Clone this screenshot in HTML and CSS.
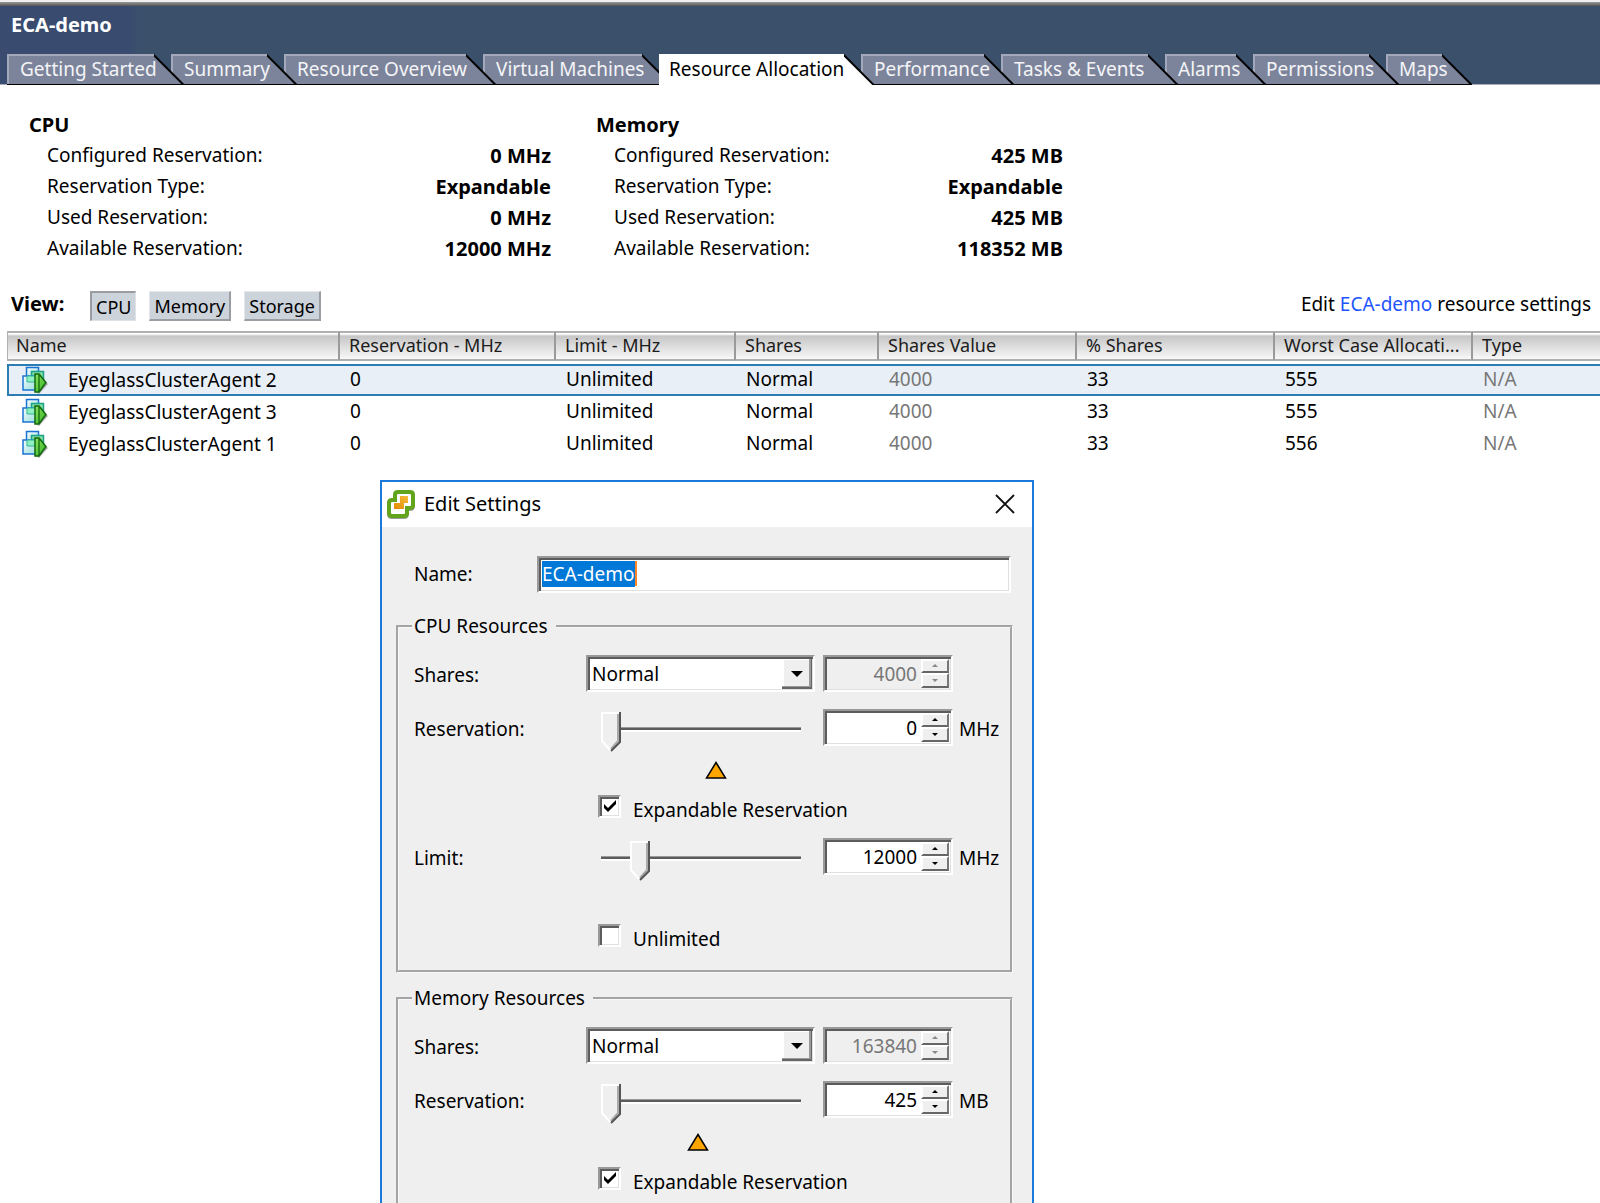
FILE: index.html
```html
<!DOCTYPE html>
<html lang="en">

<head>
    <meta charset="UTF-8">
    <meta name="viewport" content="width=device-width, initial-scale=1.0">
    <title>ECA-demo</title>
    <link rel="stylesheet" href="styles.css">
</head>

<body>
    <!-- shared icons -->
    <svg class="defs" width="0" height="0" aria-hidden="true">
        <defs>
            <linearGradient id="pane" x1="0" y1="0" x2="1" y2="1">
                <stop offset="0" stop-color="#f4fbff" />
                <stop offset="1" stop-color="#9adfd8" />
            </linearGradient>
            <linearGradient id="play" x1="0" y1="0" x2="1" y2="1">
                <stop offset="0" stop-color="#8ee860" />
                <stop offset="1" stop-color="#2fae22" />
            </linearGradient>
            <linearGradient id="gold" x1="1" y1="0" x2="0" y2="1">
                <stop offset="0" stop-color="#f7bd3a" />
                <stop offset="1" stop-color="#e08a00" />
            </linearGradient>
        </defs>
        <symbol id="vm-icon" viewBox="0 0 26 28">
            <path d="M17 9 L26 18 L17 28 L14 26 Z" fill="#8a8a8a" opacity="0.7" />
            <rect x="4.500" y="1.500" width="12" height="13" fill="url(#pane)" stroke="#1b74d4" stroke-width="1.500" />
            <rect x="9.500" y="5.500" width="12" height="13" fill="#7fe0a0" stroke="#1fa08c" stroke-width="1.500" />
            <rect x="1" y="10" width="13" height="14" fill="url(#pane)" stroke="#1b74d4" stroke-width="1.500" />
            <path d="M5 10 h10 v6 h-10 z" fill="#8ff0c0" stroke="#35b39a" stroke-width="1" />
            <path d="M13 8 h4 l7 8.500 l-7 9.500 h-4 z" fill="url(#play)" stroke="#12670f" stroke-width="1.500" />
            <path d="M17 9 V25" stroke="#12670f" stroke-width="1.300" />
        </symbol>
    </svg>

    <header class="header">
        <h1>ECA-demo</h1>
        <nav class="tabs">
            <button>Getting Started</button>
            <button>Summary</button>
            <button>Resource Overview</button>
            <button>Virtual Machines</button>
            <button class="active">Resource Allocation</button>
            <button>Performance</button>
            <button>Tasks &amp; Events</button>
            <button>Alarms</button>
            <button>Permissions</button>
            <button>Maps</button>
        </nav>
    </header>

    <main>
        <div class="totals">
            <section>
                <h2>CPU</h2>
                <dl>
                    <dt>Configured Reservation:</dt><dd>0 MHz</dd>
                    <dt>Reservation Type:</dt><dd>Expandable</dd>
                    <dt>Used Reservation:</dt><dd>0 MHz</dd>
                    <dt>Available Reservation:</dt><dd>12000 MHz</dd>
                </dl>
            </section>
            <section>
                <h2>Memory</h2>
                <dl>
                    <dt>Configured Reservation:</dt><dd>425 MB</dd>
                    <dt>Reservation Type:</dt><dd>Expandable</dd>
                    <dt>Used Reservation:</dt><dd>425 MB</dd>
                    <dt>Available Reservation:</dt><dd>118352 MB</dd>
                </dl>
            </section>
        </div>

        <div class="view-bar">
            <strong>View:</strong>
            <div class="view-buttons">
                <button class="pressed">CPU</button>
                <button>Memory</button>
                <button>Storage</button>
            </div>
            <p>Edit <a href="#settings">ECA-demo</a> resource settings</p>
        </div>

        <table>
            <colgroup>
                <col class="col-name">
                <col class="col-reservation">
                <col class="col-limit">
                <col class="col-shares">
                <col class="col-wide">
                <col class="col-wide">
                <col class="col-wide">
                <col>
            </colgroup>
            <thead>
                <tr>
                    <th>Name</th>
                    <th>Reservation - MHz</th>
                    <th>Limit - MHz</th>
                    <th>Shares</th>
                    <th>Shares Value</th>
                    <th>% Shares</th>
                    <th>Worst Case Allocati...</th>
                    <th>Type</th>
                </tr>
            </thead>
            <tbody>
                <tr class="selected">
                    <td><span class="vm"><svg><use href="#vm-icon" /></svg>EyeglassClusterAgent 2</span></td>
                    <td>0</td>
                    <td>Unlimited</td>
                    <td>Normal</td>
                    <td class="muted">4000</td>
                    <td>33</td>
                    <td>555</td>
                    <td class="muted">N/A</td>
                </tr>
                <tr>
                    <td><span class="vm"><svg><use href="#vm-icon" /></svg>EyeglassClusterAgent 3</span></td>
                    <td>0</td>
                    <td>Unlimited</td>
                    <td>Normal</td>
                    <td class="muted">4000</td>
                    <td>33</td>
                    <td>555</td>
                    <td class="muted">N/A</td>
                </tr>
                <tr>
                    <td><span class="vm"><svg><use href="#vm-icon" /></svg>EyeglassClusterAgent 1</span></td>
                    <td>0</td>
                    <td>Unlimited</td>
                    <td>Normal</td>
                    <td class="muted">4000</td>
                    <td>33</td>
                    <td>556</td>
                    <td class="muted">N/A</td>
                </tr>
            </tbody>
        </table>
    </main>

    <div class="dialog" id="settings" role="dialog" aria-labelledby="dialog-title">
        <div class="title-bar">
            <svg class="logo" viewBox="0 0 28 30" aria-hidden="true">
                <path d="M11 3 h12 q3 0 3 3 v10 q0 3 -3 3 h-3 v5 q0 3 -3 3 h-12 q-3 0 -3 -3 v-10 q0 -3 3 -3 h3 v-5 q0 -3 3 -3 z" fill="none" stroke="#9a9a9a" stroke-width="4" transform="translate(0 1)" />
                <path d="M11 3 h12 q3 0 3 3 v10 q0 3 -3 3 h-3 v5 q0 3 -3 3 h-12 q-3 0 -3 -3 v-10 q0 -3 3 -3 h3 v-5 q0 -3 3 -3 z" fill="#fff" stroke="#62a51c" stroke-width="4" />
                <path d="M13 7 h8 v7 h-4 v6 h-10 v-6 h6 z" fill="url(#gold)" />
            </svg>
            <h2 id="dialog-title">Edit Settings</h2>
            <button class="close" aria-label="Close">
                <svg viewBox="0 0 20 20"><path d="M1 1 L19 19 M19 1 L1 19" stroke="#111" stroke-width="1.800" /></svg>
            </button>
        </div>
        <form class="dialog-body">
            <div class="name-row">
                <label for="name">Name:</label>
                <div class="name-field">
                    <input class="sunken" type="text" id="name" value="ECA-demo">
                    <span class="caret"></span>
                </div>
            </div>

            <fieldset>
                <legend>CPU Resources</legend>
                <div class="row">
                    <label for="cpu_shares">Shares:</label>
                    <select class="sunken" id="cpu_shares">
                        <option>Low</option>
                        <option selected>Normal</option>
                        <option>High</option>
                    </select>
                    <div class="spin sunken disabled">
                        <input type="text" aria-label="CPU shares value" value="4000" disabled>
                        <div class="arrows"><button type="button" aria-label="Increase" disabled></button><button type="button" aria-label="Decrease" disabled></button></div>
                    </div>
                </div>
                <div class="row">
                    <label for="cpu_reservation">Reservation:</label>
                    <input type="range" id="cpu_reservation" value="0">
                    <div class="spin sunken">
                        <input type="text" aria-label="CPU reservation in MHz" value="0">
                        <div class="arrows"><button type="button" aria-label="Increase"></button><button type="button" aria-label="Decrease"></button></div>
                    </div>
                    <span class="unit">MHz</span>
                </div>
                <div class="marker">
                    <svg style="margin-left: 52%" viewBox="0 0 22 18"><path d="M11 1.500 L20.500 17 H1.500 Z" fill="#ffa500" stroke="#000" stroke-width="1.500" /></svg>
                </div>
                <div class="check">
                    <input type="checkbox" id="cpu_expandable" checked>
                    <label for="cpu_expandable">Expandable Reservation</label>
                </div>
                <div class="row">
                    <label for="cpu_limit">Limit:</label>
                    <input type="range" id="cpu_limit" value="16">
                    <div class="spin sunken">
                        <input type="text" aria-label="CPU limit in MHz" value="12000">
                        <div class="arrows"><button type="button" aria-label="Increase"></button><button type="button" aria-label="Decrease"></button></div>
                    </div>
                    <span class="unit">MHz</span>
                </div>
                <div class="marker"></div>
                <div class="check">
                    <input type="checkbox" id="cpu_unlimited">
                    <label for="cpu_unlimited">Unlimited</label>
                </div>
            </fieldset>

            <fieldset class="last">
                <legend>Memory Resources</legend>
                <div class="row">
                    <label for="mem_shares">Shares:</label>
                    <select class="sunken" id="mem_shares">
                        <option>Low</option>
                        <option selected>Normal</option>
                        <option>High</option>
                    </select>
                    <div class="spin sunken disabled">
                        <input type="text" aria-label="Memory shares value" value="163840" disabled>
                        <div class="arrows"><button type="button" aria-label="Increase" disabled></button><button type="button" aria-label="Decrease" disabled></button></div>
                    </div>
                </div>
                <div class="row">
                    <label for="mem_reservation">Reservation:</label>
                    <input type="range" id="mem_reservation" value="0">
                    <div class="spin sunken">
                        <input type="text" aria-label="Memory reservation in MB" value="425">
                        <div class="arrows"><button type="button" aria-label="Increase"></button><button type="button" aria-label="Decrease"></button></div>
                    </div>
                    <span class="unit">MB</span>
                </div>
                <div class="marker">
                    <svg style="margin-left: 43%" viewBox="0 0 22 18"><path d="M11 1.500 L20.500 17 H1.500 Z" fill="#ffa500" stroke="#000" stroke-width="1.500" /></svg>
                </div>
                <div class="check">
                    <input type="checkbox" id="mem_expandable" checked>
                    <label for="mem_expandable">Expandable Reservation</label>
                </div>
            </fieldset>
        </form>
    </div>

    <script>
        const nameInput = document.getElementById("name");
        nameInput.focus({ preventScroll: true });
        nameInput.select();
    </script>
</body>

</html>
```

FILE: styles.css
```css
* {
    box-sizing: border-box;
}

body {
    margin: 0;
    position: relative;
    height: 100vh;
    overflow: hidden;
    background: #fff;
    color: #000;
    font-family: "Noto Sans", sans-serif;
    font-size: 19px;
    line-height: 24px;
}

h1, h2, p, dl, dd {
    margin: 0;
}

button, input, select {
    margin: 0;
    padding: 0;
    border: 0;
    font: inherit;
    color: inherit;
    outline: none;
}

.defs {
    position: absolute;
}

/* header and tabs */
.header {
    padding-top: 6px;
    border-top: 2px solid #f0f0f0;
    border-bottom: 1px solid #a8adb8;
    background: linear-gradient(#999, #555) top / 100% 4px no-repeat,
        linear-gradient(90deg, #394c70 130px, #3b516b 140px);
}

.header h1 {
    padding: 5px 11px 17px;
    font-size: 20px;
    line-height: 24px;
    color: #fff;
}

.tabs {
    display: grid;
    grid-template-columns: 164px 113px 199px 176px 202px 140px 164px 88px 133px 73px;
    height: 30px;
    padding-left: 7px;
}

.tabs button {
    position: relative;
    width: calc(100% + 13px);
    padding: 0 0 2px 13px;
    text-align: left;
    white-space: nowrap;
    color: #f4f4f6;
    background:
        linear-gradient(#000, #000) left bottom / calc(100% - 2px) 1px no-repeat,
        linear-gradient(45deg, #7c849c calc(50% - 2px), #000 calc(50% - 1px), #000 50%, transparent calc(50% + 1px)) right / 30px 100% no-repeat,
        linear-gradient(#a3a9bb, #a3a9bb) left top / 2px 100% no-repeat,
        linear-gradient(#a3a9bb 2px, #7c849c 2px) left / calc(100% - 30px) 100% no-repeat;
}

/* each tab lies over the one on its right */
.tabs button:nth-child(1) { z-index: 9; }
.tabs button:nth-child(2) { z-index: 8; }
.tabs button:nth-child(3) { z-index: 7; }
.tabs button:nth-child(4) { z-index: 6; }
.tabs button:nth-child(6) { z-index: 5; }
.tabs button:nth-child(7) { z-index: 4; }
.tabs button:nth-child(8) { z-index: 3; }
.tabs button:nth-child(9) { z-index: 2; }

.tabs .active {
    z-index: 10;
    height: 31px;
    padding-left: 10px;
    color: #000;
    background:
        linear-gradient(45deg, #fff calc(50% - 2px), #000 calc(50% - 1px), #000 50%, transparent calc(50% + 1px)) right / 30px 100% no-repeat,
        linear-gradient(#fff, #fff) left / calc(100% - 30px) 100% no-repeat;
}

/* reservation totals */
.totals {
    display: flex;
    gap: 45px;
    padding: 25px 29px 0;
}

.totals section {
    width: 522px;
}

.totals section + section {
    width: 467px;
}

.totals h2 {
    font-size: 20px;
    line-height: 30px;
}

.totals dl {
    display: grid;
    grid-template-columns: 1fr auto;
    padding-left: 18px;
    line-height: 31px;
}

.totals dd {
    font-size: 20px;
    font-weight: bold;
    text-align: right;
}

/* view switch */
.view-bar {
    display: flex;
    align-items: center;
    padding: 27px 9px 10px 11px;
}

.view-bar strong {
    width: 79px;
    padding-bottom: 4px;
    font-size: 20px;
}

.view-buttons {
    display: flex;
    gap: 13px;
}

.view-bar button {
    height: 30px;
    padding: 0 4px;
    font-size: 18px;
    background: #ccd3db;
    border: 1px solid #e3e7eb;
    border-right: 2px solid #9a9da1;
    border-bottom: 2px solid #9a9da1;
}

.view-bar .pressed {
    border: 1px solid #dde2e7;
    border-left: 2px solid #999ca0;
    border-top: 2px solid #999ca0;
}

.view-bar p {
    margin-left: auto;
    padding-bottom: 4px;
}

.view-bar a {
    color: #1f55ff;
    text-decoration: none;
}

/* machines */
table {
    width: calc(100% - 7px);
    margin-left: 7px;
    table-layout: fixed;
    border-collapse: separate;
    border-spacing: 0;
}

.col-name { width: 333px; }
.col-reservation { width: 216px; }
.col-limit { width: 180px; }
.col-shares { width: 143px; }
.col-wide { width: 198px; }

th {
    height: 30px;
    padding: 0 0 2px 9px;
    text-align: left;
    font-size: 18px;
    font-weight: normal;
    white-space: nowrap;
    overflow: hidden;
    color: #1c1c1c;
    border-top: 2px solid #b0b0b0;
    border-bottom: 2px solid #b0b0b0;
    border-right: 2px solid #9a9a9a;
    background: linear-gradient(#fff 1px, #c6c6c6 3px, #f8f8f8);
}

th:first-child {
    padding-left: 8px;
    border-left: 1px solid #b0b0b0;
}

th:last-child {
    border-right: 0;
}

tbody::before {
    content: "";
    display: block;
    height: 3px;
}

td {
    height: 32px;
    padding: 0 0 3px 10px;
    white-space: nowrap;
}

td:first-child {
    padding: 0 0 0 15px;
}

.selected td {
    background: #e9eff6;
    border-top: 2px solid #2a7db5;
    border-bottom: 2px solid #2a7db5;
}

.selected td:first-child {
    padding-left: 13px;
    border-left: 2px solid #2a7db5;
}

.vm {
    display: flex;
    align-items: center;
    gap: 20px;
}

.vm svg {
    width: 26px;
    height: 28px;
}

.muted {
    color: #777;
}

/* edit settings window */
.dialog {
    position: absolute;
    left: 380px;
    top: 480px;
    bottom: 0;
    width: 654px;
    overflow: hidden;
    z-index: 20;
    background: #efefef;
    border: 2px solid #1b79d9;
    border-bottom: 0;
}

.title-bar {
    display: flex;
    align-items: center;
    gap: 9px;
    height: 45px;
    padding: 0 17px 2px 5px;
    background: #fff;
}

.title-bar h2 {
    flex: 1;
    font-size: 20px;
    font-weight: normal;
}

.logo {
    width: 28px;
    height: 30px;
}

.close {
    width: 20px;
    height: 20px;
    background: none;
}

.close svg {
    display: block;
}

.dialog-body {
    padding: 29px 19px 0 14px;
}

.sunken {
    height: 37px;
    background-color: #fff;
    border: 2px solid;
    border-color: #999 #fff #fff #999;
    box-shadow: inset 2px 2px 0 #5c5c5c, inset -1px -1px 0 #e0e0e0;
}

.name-row {
    display: flex;
    align-items: center;
    margin-bottom: 21px;
    padding: 0 2px 0 18px;
}

.name-row label {
    width: 123px;
    padding-bottom: 2px;
}

.name-field {
    position: relative;
    flex: 1;
}

.name-field input {
    display: block;
    width: 100%;
    padding: 0 3px 2px;
}

.name-field input::selection {
    background: #0078d7;
    color: #fff;
}

.caret {
    position: absolute;
    left: 98px;
    top: 5px;
    width: 2px;
    height: 25px;
    background: #ff8728;
}

fieldset {
    min-width: 0;
    margin: 0 0 13px;
    padding: 8px 0 12px 15px;
    border: 3px groove #f8f8f8;
}

fieldset.last {
    padding-bottom: 60px;
}

legend {
    margin-left: -2px;
    padding: 0 8px 0 2px;
}

.row {
    display: grid;
    grid-template-columns: 172px 229px 130px auto;
    align-items: center;
    height: 54px;
}

.row label,
.row .unit {
    padding-top: 3px;
}

.row .spin {
    margin-left: 8px;
}

select {
    appearance: none;
    padding: 2px 32px 0 4px;
    background: #fff url("data:image/svg+xml,%3Csvg xmlns='http://www.w3.org/2000/svg' width='30' height='31'%3E%3Crect width='30' height='31' fill='%23666'/%3E%3Crect width='29' height='29' fill='%23999'/%3E%3Crect width='27' height='28' fill='%23fff'/%3E%3Crect x='2' y='2' width='25' height='26' fill='%23efefef'/%3E%3Cpath d='M9 13h12l-6 6z'/%3E%3C/svg%3E") right 1px top 1px no-repeat;
}

.spin {
    display: flex;
    width: 130px;
    padding: 2px 2px 2px 2px;
}

.spin input {
    flex: 1;
    min-width: 0;
    padding: 2px 4px 0 0;
    text-align: right;
    background: none;
}

.spin.disabled {
    background: #efefef;
}

.spin.disabled input {
    color: #777;
}

.arrows {
    display: flex;
    flex-direction: column;
    width: 28px;
}

.arrows button {
    display: flex;
    flex: 1;
    align-items: center;
    justify-content: center;
    background: #efefef;
    border: 2px solid;
    border-color: #fff #777 #666 #fff;
}

.arrows button::before {
    content: "";
    border: 3px solid transparent;
    border-top-width: 0;
    border-bottom-color: #000;
}

.arrows button:last-child::before {
    border-width: 3px 3px 0;
    border-top-color: #000;
}

.arrows button:disabled::before {
    border-top-color: #888;
    border-bottom-color: #888;
}

.unit {
    padding-left: 14px;
}

input[type="range"] {
    appearance: none;
    width: 200px;
    height: 40px;
    margin: 4px 0 0 15px;
    background: linear-gradient(#999 1px, #5c5c5c 1px 3px, #fff 3px) left 0 top 18px / 100% 5px no-repeat;
}

input[type="range"]::-webkit-slider-thumb {
    appearance: none;
    width: 20px;
    height: 40px;
    margin-top: 6px;
    background: url("data:image/svg+xml,%3Csvg xmlns='http://www.w3.org/2000/svg' width='20' height='40'%3E%3Cpath d='M0 0h20v30l-10 10l-10-10z' fill='%23efefef'/%3E%3Cpath d='M10 39L1 29V1h17' fill='none' stroke='%23fff' stroke-width='2'/%3E%3Cpath d='M17 2v27l-7 8' fill='none' stroke='%23aaa' stroke-width='2'/%3E%3Cpath d='M19 0v30l-9 9' fill='none' stroke='%23555' stroke-width='2'/%3E%3C/svg%3E") no-repeat;
}

/* amber marker under the slider */
.marker {
    display: flex;
    align-items: center;
    width: 200px;
    height: 32px;
    margin-left: 187px;
}

.marker svg {
    width: 22px;
    height: 18px;
}

.check {
    display: flex;
    align-items: center;
    gap: 12px;
    height: 43px;
    padding-left: 184px;
}

.check label {
    padding-top: 4px;
}

input[type="checkbox"] {
    appearance: none;
    width: 23px;
    height: 23px;
    margin-bottom: 2px;
    background: #fff;
    border: 2px solid;
    border-color: #999 #fff #fff #999;
    box-shadow: inset 2px 2px 0 #5c5c5c, inset -1px -1px 0 #e0e0e0;
}

input[type="checkbox"]:checked {
    background: #fff url("data:image/svg+xml,%3Csvg xmlns='http://www.w3.org/2000/svg' width='14' height='13'%3E%3Cpath d='M1 4l4 4l8-8v4l-8 8l-4-4z'/%3E%3C/svg%3E") 3px 3px no-repeat;
}
```
